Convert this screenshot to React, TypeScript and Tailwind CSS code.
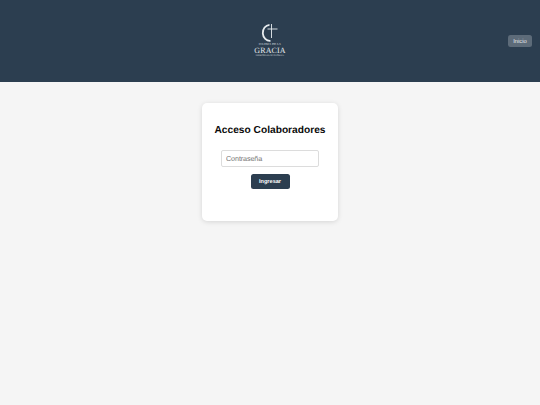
export default function App() {
  return (
    <div className="min-h-[405px] bg-[#f5f5f5] font-['Liberation_Sans',sans-serif] [text-rendering:geometricPrecision]">
      <header className="relative flex h-[82px] items-center justify-center bg-[#2c3e50]">
        <div className="flex flex-col items-center text-[#e8ecef]">
          <svg width="26" height="20" viewBox="0 0 26 20" fill="none" className="mt-[-1px]">
            <path d="M12.5 1.8 A7.2 8 0 1 0 13.5 17.8" stroke="#e8ecef" strokeWidth="1.8" />
            <path d="M14.5 1 V15 M10.5 6 H20.5" stroke="#e8ecef" strokeWidth="0.9" />
          </svg>
          <span className="font-['Liberation_Serif',serif] text-[3px] leading-[3.5px] tracking-[0.1px]">IGLESIA DE LA</span>
          <span className="font-['Liberation_Serif',serif] text-[8px] leading-[7px] tracking-[0.1px]">GRACIA</span>
          <span className="mt-[1px] font-['Liberation_Serif',serif] text-[1.8px] leading-[3px]">PRESBITERIANA DE GUATEMALA</span>
        </div>
        <a className="absolute right-[8px] top-[35px] flex h-[12px] w-[24px] items-center justify-center rounded-[2.5px] bg-[#5d6b79] pt-[2px] text-[5.8px] text-[#e6e9ec]">
          Inicio
        </a>
      </header>
      <main className="flex justify-center pt-[21px]">
        <div className="flex h-[118px] w-[136px] flex-col items-center rounded-[5px] bg-white pt-[20px] shadow-[0_1px_5px_rgba(0,0,0,0.13)]">
          <h1 className="text-[10.2px] font-bold leading-[16px] text-[#0b0b0b]">Acceso Colaboradores</h1>
          <input
            placeholder="Contraseña"
            className="mt-[11px] h-[17px] w-[98px] rounded-[2px] border border-[#dcdcdc] px-[4px] text-[7.2px] tracking-[-0.1px] outline-none placeholder:text-[#757575] [text-rendering:geometricPrecision]"
          />
          <button className="mt-[7px] flex h-[15px] w-[39px] items-center justify-center rounded-[2.5px] bg-[#2c3e50] pt-[1px] text-[5.6px] font-bold text-white [text-rendering:geometricPrecision]">
            Ingresar
          </button>
        </div>
      </main>
    </div>
  );
}
